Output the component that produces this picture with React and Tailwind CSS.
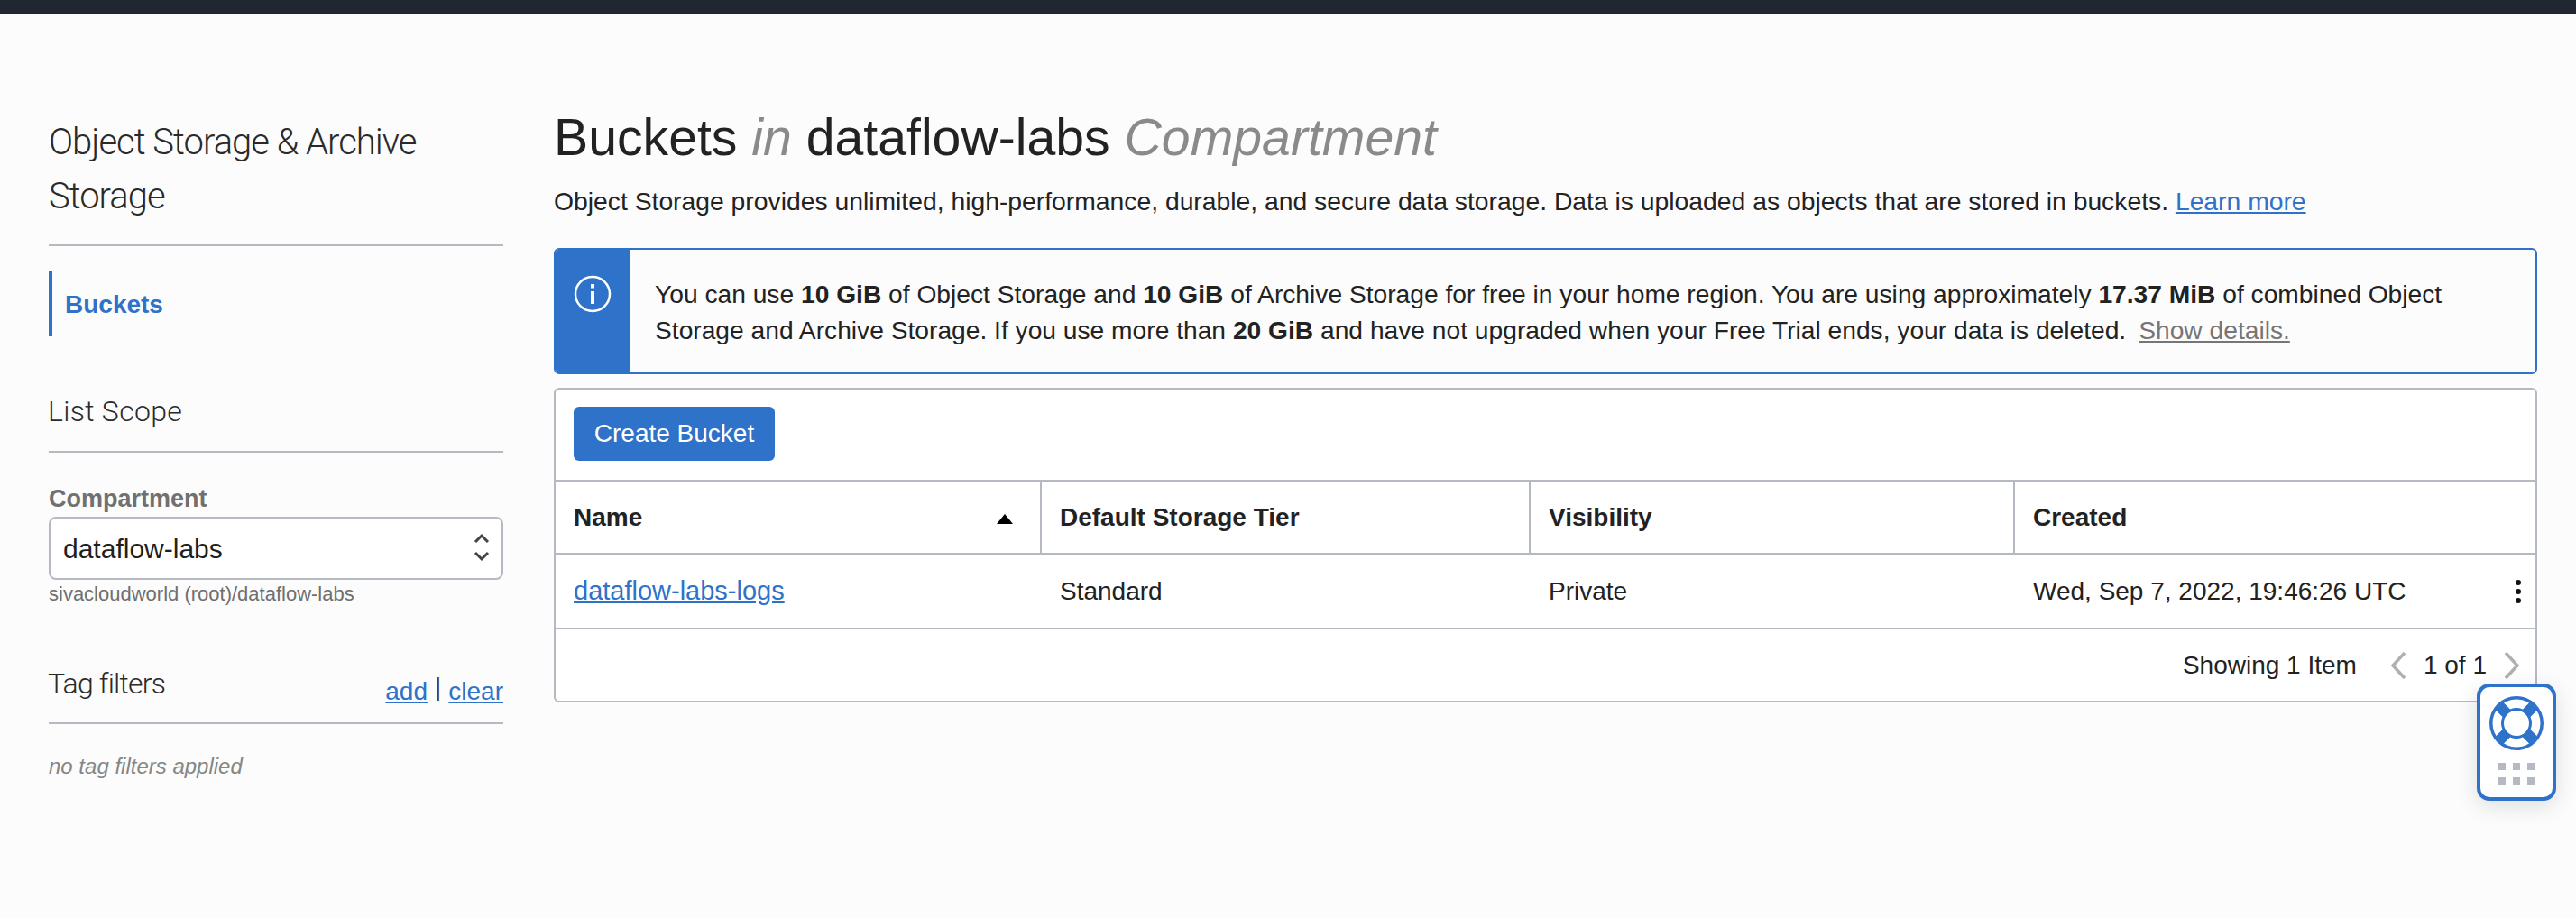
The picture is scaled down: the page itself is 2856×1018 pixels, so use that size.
import React from "react";

const SectionTitle = ({ className, children }) => (
  <div className={"font-['Roboto',sans-serif] font-light text-[32px] leading-[44px] text-[#2a2a2a] " + className}>{children}</div>
);

const LifeRing = () => (
  <svg width="60" height="60" viewBox="0 0 60 60">
    <circle cx="30" cy="30" r="30" fill="#2f72c9" />
    <circle cx="30" cy="30" r="26.5" fill="#fff" />
    <g stroke="#2f72c9" strokeWidth="12">
      <line x1="11" y1="11" x2="49" y2="49" />
      <line x1="49" y1="11" x2="11" y2="49" />
    </g>
    <circle cx="30" cy="30" r="16" fill="#fff" />
    <circle cx="30" cy="30" r="15.5" fill="none" stroke="#2f72c9" strokeWidth="3" />
  </svg>
);

const HelpWidget = () => (
  <div className="absolute left-[2746px] top-[758px] w-[88px] h-[130px] bg-white border-4 border-[#2f72c9] rounded-[14px] shadow-[0_6px_24px_rgba(0,0,0,0.12)] flex flex-col items-center pt-[10px]">
    <LifeRing />
    <div className="grid grid-cols-3 gap-2 mt-[14px]">
      {[0, 1, 2, 3, 4, 5].map((i) => (
        <span key={i} className="w-2 h-2 bg-[#b5b9c2]" />
      ))}
    </div>
  </div>
);

const Sidebar = () => (
  <aside className="w-[504px] shrink-0 pt-[112px]">
    <h2 className="font-['Roboto',sans-serif] font-light text-[40px] tracking-[-1px] leading-[60px] text-[#2a2a2a] pb-[23px] border-b-2 border-[#b5b9c2]">
      Object Storage &amp; Archive Storage
    </h2>
    <div className="mt-7 h-[72px] border-l-4 border-[#2f72c9] pl-[14px] pt-[2px] flex items-center">
      <span className="font-bold text-[28px] text-[#2f72c9]">Buckets</span>
    </div>
    <div className="mt-[61px] border-b-2 border-[#b5b9c2] pb-[22px]">
      <SectionTitle className="tracking-[0.3px] -ml-[1px]">List Scope</SectionTitle>
    </div>
    <div className="mt-[37px] text-[27px] leading-[28px] font-bold text-[#707070]">Compartment</div>
    <div className="mt-[6px] h-[70px] border-2 border-[#b5b9c2] rounded-[8px] bg-white flex items-center justify-between pl-[14px] pr-[13px] text-[30px] text-[#1f1f1f]">
      <span>dataflow-labs</span>
      <svg width="18" height="36" viewBox="0 0 18 36" fill="none" stroke="#444" strokeWidth="3">
        <path d="M2 11 L9 4 L16 11" />
        <path d="M2 23 L9 30 L16 23" />
      </svg>
    </div>
    <div className="mt-[3px] text-[22px] leading-[26px] text-[#6f6f6f]">sivacloudworld (root)/dataflow-labs</div>
    <div className="mt-[63px] flex justify-between border-b-2 border-[#b5b9c2] h-[68px]">
      <SectionTitle className="tracking-[-0.8px] -ml-[1px] mt-[1px]">Tag filters</SectionTitle>
      <div className="text-[28px] leading-[32px] mt-[16px] text-[#444] flex gap-[8px]">
        <a className="underline text-[#2f72c9]">add</a>
        <span className="font-light -mt-[5px]">|</span>
        <a className="underline text-[#2f72c9]">clear</a>
      </div>
    </div>
    <div className="mt-[33px] italic text-[24px] leading-[28px] text-[#868686]">no tag filters applied</div>
  </aside>
);

const Notice = () => (
  <div className="mt-[32px] h-[140px] flex border-2 border-[#2f72c9] rounded-[6px] overflow-hidden">
    <div className="w-[82px] bg-[#2f72c9] shrink-0 flex justify-center pt-[28px]">
      <svg width="42" height="42" viewBox="0 0 42 42" fill="none" stroke="#fff">
        <circle cx="21" cy="21" r="19" strokeWidth="2.5" />
        <rect x="19" y="18" width="4" height="14" fill="#fff" stroke="none" />
        <rect x="19" y="10" width="4" height="4.5" fill="#fff" stroke="none" />
      </svg>
    </div>
    <p className="pl-[28px] pt-[29px] text-[28.2px] leading-[40px] text-[#222]">
      You can use <b>10 GiB</b> of Object Storage and <b>10 GiB</b> of Archive Storage for free in your home region. You are using approximately <b>17.37 MiB</b> of combined Object
      <br />
      Storage and Archive Storage. If you use more than <b>20 GiB</b> and have not upgraded when your Free Trial ends, your data is deleted.
      <a className="underline text-[#767676] ml-[14px]">Show details.</a>
    </p>
  </div>
);

const HeadCell = ({ className, children }) => (
  <div className={"flex items-center justify-between px-5 font-bold text-[28px] text-[#222] " + className}>{children}</div>
);

const BodyCell = ({ className, children }) => (
  <div className={"flex items-center justify-between px-5 text-[28px] text-[#222] " + className}>{children}</div>
);

const Chevron = ({ d }) => (
  <svg width="20" height="32" viewBox="0 0 20 32" fill="none" stroke="#b0b0b0" strokeWidth="3.5">
    <path d={d} />
  </svg>
);

const BucketTable = () => (
  <div className="mt-[15px] h-[349px] bg-white border-2 border-[#b5b9c2] rounded-[6px]">
    <div className="h-[100px] flex items-start pl-5 pt-[19px]">
      <button className="w-[223px] h-[60px] bg-[#2f72c9] rounded-[6px] text-white text-[28px]">Create Bucket</button>
    </div>
    <div className="h-[83px] flex border-y-2 border-[#b5b9c2]">
      <HeadCell className="w-[539px] border-r-2 border-[#b5b9c2]">
        Name
        <span className="w-0 h-0 border-x-[9px] border-x-transparent border-b-[11px] border-b-black mr-[10px] mt-[4px]" />
      </HeadCell>
      <HeadCell className="w-[542px] border-r-2 border-[#b5b9c2]">Default Storage Tier</HeadCell>
      <HeadCell className="w-[537px] border-r-2 border-[#b5b9c2]">Visibility</HeadCell>
      <HeadCell className="flex-1">Created</HeadCell>
    </div>
    <div className="h-[83px] flex border-b-2 border-[#b5b9c2]">
      <BodyCell className="w-[539px]">
        <a className="underline text-[#2f72c9] text-[29px]">dataflow-labs-logs</a>
      </BodyCell>
      <BodyCell className="w-[542px]">Standard</BodyCell>
      <BodyCell className="w-[537px]">Private</BodyCell>
      <BodyCell className="flex-1 pr-[16px]">
        Wed, Sep 7, 2022, 19:46:26 UTC
        <span className="flex flex-col gap-[4px]">
          <span className="w-[6px] h-[6px] rounded-full bg-[#111]" />
          <span className="w-[6px] h-[6px] rounded-full bg-[#111]" />
          <span className="w-[6px] h-[6px] rounded-full bg-[#111]" />
        </span>
      </BodyCell>
    </div>
    <div className="h-[80px] flex items-center justify-end pr-[16px] text-[28px] text-[#222]">
      <span>Showing 1 Item</span>
      <span className="ml-[36px] mr-[18px] flex"><Chevron d="M17 2 L4 16 L17 30" /></span>
      <span>1 of 1</span>
      <span className="ml-[18px] flex"><Chevron d="M3 2 L16 16 L3 30" /></span>
    </div>
  </div>
);

export default function App() {
  return (
    <div className="relative w-[2856px] h-[1018px] bg-[#fcfcfc] font-['Liberation_Sans',Arial,sans-serif] overflow-hidden">
      <div className="h-4 bg-[#202733]" />
      <div className="flex pl-[54px] pr-[43px]">
        <Sidebar />
        <main className="flex-1 ml-[56px] pt-[101px]">
          <h1 className="text-[57.2px] leading-[70px] text-[#222]">
            Buckets <i className="text-[#8a8a8a]">in</i> dataflow-labs <i className="text-[#8a8a8a]">Compartment</i>
          </h1>
          <p className="mt-[16px] text-[28.3px] leading-[40px] text-[#222]">
            Object Storage provides unlimited, high-performance, durable, and secure data storage. Data is uploaded as objects that are stored in buckets. <a className="underline text-[#2f72c9]">Learn more</a>
          </p>
          <Notice />
          <BucketTable />
        </main>
      </div>
      <HelpWidget />
    </div>
  );
}
